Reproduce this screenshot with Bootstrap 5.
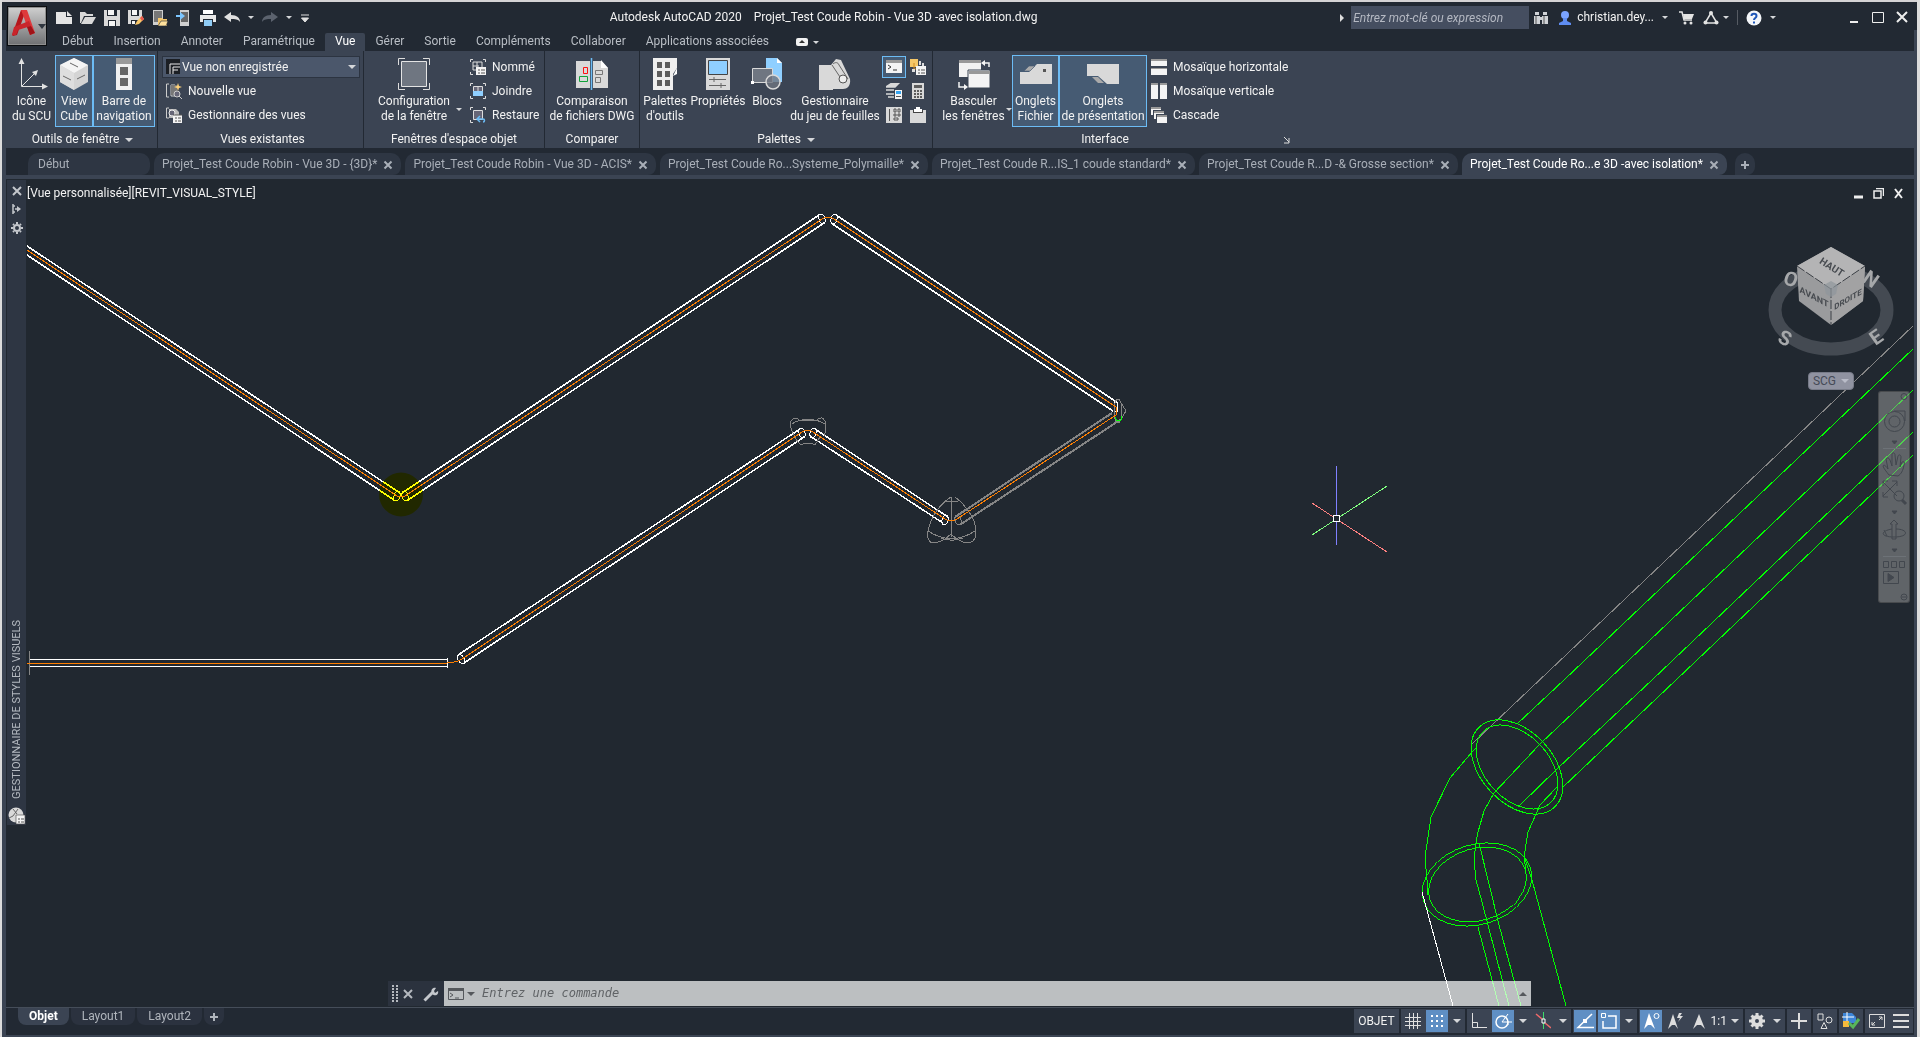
<!DOCTYPE html>
<html lang="fr">
<head>
<meta charset="utf-8">
<meta name="viewport" content="width=device-width, initial-scale=1">
<title>Autodesk AutoCAD 2020</title>
<link href="https://cdn.jsdelivr.net/npm/bootstrap@5.3.0/dist/css/bootstrap.min.css" rel="stylesheet">
<style>
:root{--dark:#222933;--panel:#3b4453;--canvas:#212830;--tab:#2e3643;--ink:#f2f2f2;--soft:#b9bec5;--hi:#6cbcf5}
html,body{height:100%}
body{background:#dcdcdc;font-family:Roboto,"Open Sans",sans-serif;font-size:12px;line-height:15px;color:var(--ink);overflow:hidden;white-space:nowrap}
button,input,select{font:inherit;color:inherit;background:none;border:0;padding:0;margin:0;line-height:15px}
svg{display:block;flex:none}
h2{font-size:12px;line-height:15px;font-weight:400;margin:0}
.app-window{height:100vh;padding:0 3px 2px 4px;margin:0 3px 0 2px;border-top:2px solid #d5d3d5;background:linear-gradient(var(--dark) 28px,var(--panel) 28px)}
.app-head{background:var(--dark)}
.app-logo{width:40px;height:40px;margin:4px 9px 0 1px;border:1px solid #0b0d10;background:linear-gradient(#d0d0d0,#6f7072);box-shadow:inset 0 0 0 1px #8f8f8f}
.head-row{height:31px}
.quick{gap:8px}
.doc-title{gap:12px}
.caret{width:0;height:0;flex:none;border:4px solid transparent;border-top-color:#d5d7da;border-bottom:0}
.caret.sm{border-width:3px;border-bottom-width:0}
.seek{width:178px;height:23px;background:#454e60;padding:0 2px;font-style:italic}
.seek::placeholder,.cmd-input::placeholder{color:inherit;opacity:1}
.seek{color:#b4b8c2}
.shop{margin-left:11px}
.win-keys{margin-left:66px}
.menu-row{margin-left:-4px}
.menu-row a{color:var(--soft);text-decoration:none;height:18px;padding:0 10px;line-height:17px}
.menu-row a.on{background:var(--panel);color:#fff;border-radius:2px 2px 0 0}
.ribbon{background:var(--panel);margin:0 0 0 2px}
.pane{border-right:1px solid var(--dark);height:97px;padding-top:4px;flex:none}
.pane-body{height:72px}
.pane-name{height:21px;padding-top:4px;gap:6px}
.big{height:72px;flex:none;border:1px solid transparent;padding-top:2px;display:flex;flex-direction:column;align-items:center;gap:4px;line-height:15px;text-align:center}
.big.on,.mini.on{background:#465b73;border-color:var(--hi)}
.line-btn{height:24px;display:flex;align-items:center;gap:6px}
.view-pick{position:relative;width:198px;height:22px;margin:1px 0;background:#4b576b;border:1px solid #2c3441}
.view-pick select{appearance:none;width:100%;height:20px;padding:0 16px 0 19px}
.view-pick svg{position:absolute;left:3px;top:2px}
.view-pick .caret{position:absolute;right:3px;top:8px;pointer-events:none}
.mini{width:24px;height:22px;margin:1px 0;border:1px solid transparent;display:flex;align-items:center;justify-content:center}
.file-tabs{background:var(--dark);height:27px;padding:5px 0 0 22px;color:#a9afb8}
.file-tab{height:22px;background:var(--tab);border-radius:10px 10px 8px 0;padding:1px 8px 0 8px;gap:6px;margin-right:4px}
.file-tab:first-child{width:122px;padding-left:10px}
.file-tab.on{background:var(--panel);color:#fff}
.file-tab a{color:inherit;text-decoration:none}
.space{background:var(--canvas);margin-top:4px;position:relative;min-height:0;overflow:hidden}
.drawing{position:absolute;inset:0;width:100%;height:100%}
.palette{position:absolute;left:1px;top:1px;width:19px;height:645px;background:var(--tab);color:#b5bac1;padding:6px 0 0}
.palette h2{writing-mode:vertical-rl;transform:rotate(180deg);font-size:11px;line-height:13px}
.view-label{position:absolute;left:21px;top:7px}
.view-win{position:absolute;right:10px;top:9px;gap:9px}
.scg{position:absolute;right:60px;top:193px;width:46px;height:18px;border-radius:4px;background:#9093a1;border:1px solid #777b88;color:#454a56;gap:5px;line-height:14px}
.scg .caret{border-top-color:#b9bcc8}
.nav-bar{position:absolute;right:4px;top:212px;width:32px;height:212px;border-radius:3px;background:rgba(160,160,160,.5);border:1px solid rgba(0,0,0,.25)}
.command{position:absolute;left:382px;right:383px;bottom:1px;height:25px}
.cmd-grip{width:56px;background:#2b323e;gap:4px}
.cmd-field{background:rgba(255,255,255,.7);color:#55585c;gap:3px}
.cmd-field .caret{border-top-color:#55585c}
.cmd-input{font:italic 12px/15px "DejaVu Sans Mono",monospace;color:#606366;outline:0}
.foot{background:var(--dark);height:28px;border-top:1px solid #454d59}
.lay-tab{height:17px;background:#2b323f;color:#b0b5bc;border-radius:0 0 8px 8px;padding:0 11px;line-height:16px;text-decoration:none;margin-right:2px}
.lay-tab.on{background:var(--panel);color:#fff;font-weight:700}
.grp{background:var(--panel);height:24px;display:flex;align-items:center}
.st{width:24px;height:24px;border:1px solid transparent;background-clip:padding-box;display:flex;align-items:center;justify-content:center}
.st.on{background-color:#5f8fc4}
.status{gap:2px;padding:1px 1px 0 0}
</style>
</head>
<body>
<div class="app-window d-flex flex-column">
<header class="app-head d-flex">
  <button class="app-logo d-flex align-items-center" aria-label="Menu de l'application">
    <svg width="38" height="38" viewBox="0 0 38 38"><path d="M4 28 13 3h5l-9 25-4 1z" fill="#b3161c"/><path d="M13 3h6l8 23-5 2L15 8z" fill="#de3a3c"/><path d="M4 28 6 20 21 14l2 5-13 4-2 5z" fill="#c9252b"/><path d="M22 28l-3-8 4-1 4 7z" fill="#a01318"/><path d="M30 17h8l-4 5z" fill="#30363f"/></svg>
  </button>
  <div class="flex-grow-1">
    <div class="head-row d-flex align-items-center">
      <div class="quick d-flex align-items-center">
        <button aria-label="Nouveau"><svg width="16" height="16"><path d="M0 2h10v5h6v7H0z" fill="#e4e4e4"/><path d="M11 1l5 5h-5z" fill="#e4e4e4"/></svg></button>
        <button aria-label="Ouvrir"><svg width="16" height="16"><path d="M0 2h5l2 2h6v2H4L1 13H0z" fill="#d9d9d9"/><path d="M5 7h11l-4 7H1z" fill="#d9d9d9"/></svg></button>
        <button aria-label="Enregistrer"><svg width="16" height="16"><path d="M0 0h16v16H0z" fill="#d9d9d9"/><path d="M3 0h10v6H3zM4 10h8v6H4z" fill="#222933"/><path d="M4 0h6v5H4zM5 11h6v5H5z" fill="#f4f4f4"/></svg></button>
        <button aria-label="Enregistrer sous"><svg width="16" height="16"><path d="M0 0h14v8l-6 6H0z" fill="#d9d9d9"/><path d="M3 0h8v6H3zM3 10h7v4H3z" fill="#222933"/><path d="M4 0h5v5H4zM4 11h3v3H4z" fill="#f4f4f4"/><path d="M7 15l2-4 5-5 2 3-5 5z" fill="#f8c76a"/><path d="M12 8l2-2 2 3-2 2z" fill="#e8554d"/></svg></button>
        <button aria-label="Ouvrir depuis le web"><svg width="16" height="16"><path d="M1 0h10v15H1z" fill="#d0d0d0"/><path d="M2 1h8v11H2z" fill="#777"/><path d="M6 8h4l1 1h4v7H6z" fill="#f4c66c"/><path d="M9 11h7l-2 5H6z" fill="#ffe09c" stroke="#222933" stroke-width=".6"/></svg></button>
        <button aria-label="Enregistrer vers le web"><svg width="16" height="16"><path d="M4 0h9v16H4z" fill="#d0d0d0"/><path d="M5 2h7v10H5z" fill="#666"/><path d="M0 5h4V2l5 4-5 4V7H0z" fill="#7cc6ff"/></svg></button>
        <button aria-label="Imprimer"><svg width="16" height="16"><path d="M3 0h10v4H3z" fill="#fff"/><path d="M0 5h16v7H0z" fill="#e8e8e8"/><path d="M3 9h10v7H3z" fill="#222933"/><path d="M4 10h8v6H4z" fill="#8fcbf5"/></svg></button>
        <button aria-label="Annuler"><svg width="16" height="16"><path d="M0 7l7-5v3c6 0 9 3 9 7-2-3-5-3-9-3v3z" fill="#e0e0e0"/></svg></button>
        <span class="caret sm"></span>
        <button aria-label="Rétablir"><svg width="16" height="16"><path d="M16 7 9 2v3c-6 0-9 3-9 7 2-3 5-3 9-3v3z" fill="#5b626e"/></svg></button>
        <span class="caret sm"></span>
        <button aria-label="Personnaliser"><svg width="10" height="10"><path d="M1 2h8M1.500 5h7L5 9z" stroke="#e0e0e0" fill="#e0e0e0"/></svg></button>
      </div>
      <div class="doc-title flex-grow-1 d-flex justify-content-center"><span>Autodesk AutoCAD 2020</span><span>Projet_Test Coude Robin - Vue 3D -avec isolation.dwg</span></div>
      <svg width="10" height="10" class="me-1"><path d="M3 1l4 4-4 4z" fill="#ddd"/></svg>
      <input class="seek" type="text" aria-label="Recherche" placeholder="Entrez mot-clé ou expression">
      <button class="ms-1 me-2" aria-label="Rechercher"><svg width="16" height="16"><path d="M1 6h6v8H1zM9 6h6v8H9zM2 2h4v3H2zM10 2h4v3h-4zM7 7h2v3H7z" fill="#cfd2d6"/><path d="M3 6v8M11 6v8" stroke="#555"/></svg></button>
      <button class="d-flex align-items-center gap-1"><svg width="16" height="16"><circle cx="8" cy="5" r="4" fill="#7aa3ff"/><path d="M6 8h4v3l4 2v2H2v-2l4-2z" fill="#5f8df2"/></svg>christian.dey...<span class="caret sm ms-1"></span></button>
      <button class="shop" aria-label="Boutique"><svg width="16" height="16"><path d="M0 2h3l2 8h8" fill="none" stroke="#e3e3e3" stroke-width="1.500"/><path d="M4 4h11l-2 5H5z" fill="#e3e3e3"/><circle cx="6" cy="13" r="1.500" fill="#e3e3e3"/><circle cx="12" cy="13" r="1.500" fill="#e3e3e3"/></svg></button>
      <button class="ms-2 d-flex align-items-center gap-1" aria-label="Autodesk 360"><svg width="16" height="16"><path d="M8 3 2 13h12z" fill="none" stroke="#e3e3e3" stroke-width="1.500"/><circle cx="8" cy="3" r="2" fill="#e3e3e3"/><circle cx="2.500" cy="12.500" r="2" fill="#e3e3e3"/><circle cx="13.500" cy="12.500" r="2" fill="#e3e3e3"/></svg><span class="caret sm"></span></button>
      <div class="vr mx-2 my-2"></div>
      <button class="d-flex align-items-center gap-2" aria-label="Aide"><svg width="16" height="16"><circle cx="8" cy="8" r="7.500" fill="#f4f6fa"/><path d="M5.500 6c0-3 5-3 5 0 0 2-2.500 2-2.500 4M8 11.500v2" fill="none" stroke="#1e56b8" stroke-width="2"/></svg><span class="caret sm"></span></button>
      <div class="win-keys d-flex align-items-center"><button aria-label="Réduire"><svg width="24" height="16"><path d="M8 12h8" stroke="#eee" stroke-width="2"/></svg></button><button aria-label="Agrandir"><svg width="24" height="16"><path d="M6.500 2.500h11v10h-11z" fill="none" stroke="#eee"/></svg></button><button aria-label="Fermer"><svg width="24" height="16"><path d="M7 2l10 10M17 2L7 12" stroke="#eee" stroke-width="2"/></svg></button></div>
    </div>
    <nav class="menu-row d-flex" aria-label="Ruban">
      <a href="#">Début</a><a href="#">Insertion</a><a href="#">Annoter</a><a href="#">Paramétrique</a><a href="#" class="on">Vue</a><a href="#">Gérer</a><a href="#">Sortie</a><a href="#">Compléments</a><a href="#">Collaborer</a><a href="#">Applications associées</a>
      <button class="d-flex align-items-center gap-1 ms-3" aria-label="Réduire le ruban"><svg width="14" height="10"><rect x="1" y="1" width="12" height="8" rx="2" fill="#f2f2f2"/><path d="M4 6h6L7 3z" fill="#333"/></svg><span class="caret sm"></span></button>
    </nav>
  </div>
</header>

<section class="ribbon d-flex">
  <div class="pane" style="width:150px">
    <div class="pane-body d-flex">
      <button class="big" style="width:47px"><svg width="32" height="32"><path d="M5.500 3v25.500H30M6 28 20 14" fill="none" stroke="#e2e2e2"/><path d="M5.500 0l3 6h-6zM32 28.500l-6 3v-6zM22 12l-6 2 4 4z" fill="#e2e2e2"/></svg><span>Icône<br>du SCU</span></button>
      <button class="big on" style="width:38px"><svg width="32" height="32"><path d="M16 0l14 7v17l-14 8L2 24V7z" fill="#d4d4d4"/><path d="M16 0l14 7-14 8L2 7z" fill="#f4f4f4"/><path d="M16 15v17L2 24V7z" fill="#dedede"/><path d="M12 5l8 4M5 18l8 4M19 21l8-4" stroke="#666" fill="none"/></svg><span>View<br>Cube</span></button>
      <button class="big on" style="width:62px"><svg width="32" height="32"><path d="M8 0h16v6H8z" fill="#999"/><path d="M8 6h16v26H8z" fill="#f0f0f0"/><path d="M12 9h8v8h-8zM12 20h8v8h-8z" fill="#666"/></svg><span>Barre de<br>navigation</span></button>
    </div>
    <div class="pane-name d-flex align-items-center justify-content-center"><h2>Outils de fenêtre</h2><span class="caret"></span></div>
  </div>
  <div class="pane" style="width:206px;padding-left:4px">
    <div class="pane-body d-flex flex-column">
      <div class="view-pick"><svg width="16" height="16"><path d="M0 0h14v15H0z" fill="#1c1f24"/><path d="M4 15V5h10M7 15V8h7M7 11h5" stroke="#e8e8e8" fill="none"/></svg><select aria-label="Vue enregistrée"><option>Vue non enregistrée</option></select><span class="caret"></span></div>
      <button class="line-btn ms-1"><svg width="16" height="16"><path d="M3 1H.5v13H3M5 2h4M5 2v11h4" stroke="#ccc" fill="none"/><path d="M5 2h6v10H5z" fill="#777"/><circle cx="11" cy="11" r="3" fill="#667" stroke="#ccc"/><path d="M13 13l3 3" stroke="#ccc"/><path d="M12 0l1 3 3 1-3 1-1 3-1-3-3-1 3-1z" fill="#ffd27a"/></svg>Nouvelle vue</button>
      <button class="line-btn ms-1"><svg width="16" height="16"><path d="M3 1H.5v10H3" stroke="#ccc" fill="none"/><path d="M3 2h7l3 3v6H3z" fill="#bbb"/><circle cx="6" cy="6" r="3" fill="#667" stroke="#eee"/><path d="M7 8h9v8H7z" fill="#f4f4f4"/><path d="M7 8h9M9 11h2M12 11h3M9 14h2M12 14h3" stroke="#555"/></svg>Gestionnaire des vues</button>
    </div>
    <div class="pane-name d-flex align-items-center justify-content-center"><h2>Vues existantes</h2></div>
  </div>
  <div class="pane" style="width:181px">
    <div class="pane-body d-flex">
      <button class="big ms-2" style="width:84px"><svg width="32" height="32"><path d="M7 .5H.5V7M25 .5h6.500V7M.5 25v6.500H7M31.500 25v6.500H25" stroke="#ddd" fill="none"/><path d="M3.500 3.500h25v25h-25z" fill="#6f7681" stroke="#e4e4e4"/></svg><span>Configuration<br>de la fenêtre</span></button>
      <span class="caret sm align-self-end mb-3 me-2"></span>
      <div>
        <button class="line-btn"><svg width="16" height="16"><path d="M3 .5H.5V3M13 .5h2.500V3M.5 13v2.500H3M3 3h9v8H3zM3 7h6M7 3v5" stroke="#ddd" fill="none"/><path d="M6 8h10v8H6z" fill="#f4f4f4"/><path d="M8 11h2M11 11h4M8 14h2M11 14h4" stroke="#555"/></svg>Nommé</button>
        <button class="line-btn"><svg width="16" height="16"><path d="M3 .5H.5V3M13 .5h2.500V3M.5 13v2.500H3M13 15.500h2.500V13" stroke="#ddd" fill="none"/><path d="M3.500 3.500h9v5h-9zM8 3v5" stroke="#ddd" fill="#667"/><path d="M3 8h10v5H3z" fill="#8fcfff"/></svg>Joindre</button>
        <button class="line-btn"><svg width="16" height="16"><path d="M3 .5H.5V3M13 .5h2.500V3M.5 13v2.500H3" stroke="#ddd" fill="none"/><path d="M3.500 3.500h9v9h-9z" stroke="#ddd" fill="#667"/><path d="M7 12h6c2 0 2 3 0 3M10 9l-3 3 3 3" stroke="#6cbcf5" stroke-width="1.500" fill="none"/></svg>Restaure</button>
      </div>
    </div>
    <div class="pane-name d-flex align-items-center justify-content-center"><h2>Fenêtres d'espace objet</h2></div>
  </div>
  <div class="pane" style="width:95px">
    <div class="pane-body d-flex justify-content-center">
      <button class="big"><svg width="32" height="32"><path d="M0 3h14v27H0zM17 3h8l7 7v20H17z" fill="#d9d9d9"/><path d="M25 2l7 8h-7z" fill="#fff"/><path d="M15.500 0v32" stroke="#6cbcf5" stroke-width="1.500"/><path d="M7.500 9.500h4v6h-4z" fill="none" stroke="#f11"/><path d="M3.500 18.500h8v5h-8z" fill="none" stroke="#12a33a"/><path d="M19.500 12.500h7v4h-7zM19.500 19.500h5v5h-5z" fill="none" stroke="#777"/></svg><span>Comparaison<br>de fichiers DWG</span></button>
    </div>
    <div class="pane-name d-flex align-items-center justify-content-center"><h2>Comparer</h2></div>
  </div>
  <div class="pane" style="width:293px">
    <div class="pane-body d-flex">
      <button class="big" style="width:50px"><svg width="32" height="32"><path d="M4 0h24v10l-4 6v16H4z" fill="#efefef"/><path d="M28 10v6l-4 2z" fill="#fff"/><path d="M8 4h5v6H8zM16 4h5v6h-5zM8 13h5v6H8zM16 13h5v6h-5zM8 22h5v6H8zM16 22h5v6h-5z" fill="#5d5d5d"/></svg><span>Palettes<br>d'outils</span></button>
      <button class="big" style="width:56px"><svg width="32" height="32"><path d="M4 0h24v32H4z" fill="#d9d9d9"/><path d="M6.500 2.500h19v14h-19z" fill="#8fcfff" stroke="#444"/><path d="M7 21.500h17M7 27.500h17M12 19v5M19 25v5" stroke="#666"/></svg><span>Propriétés</span></button>
      <button class="big" style="width:42px"><svg width="32" height="32"><path d="M15 0h11l5 5v19H15z" fill="#8fcfff"/><path d="M26 0l5 5h-5z" fill="#fff"/><path d="M1.500 10.500h20v14h-20z" fill="#6f7681" stroke="#d9d9d9"/><circle cx="22" cy="24" r="7" fill="#6f7681" fill-opacity=".8" stroke="#d9d9d9" stroke-width="1.500"/><path d="M0 23h3v3H0z" fill="#fff"/></svg><span>Blocs</span></button>
      <button class="big" style="width:94px"><svg width="32" height="32"><path d="M0 7h14v25H0z" fill="#d9d9d9"/><path d="M0 31V7h12l5-6 5 1 9 19c1 7-3 10-7 10z" fill="#d9d9d9"/><path d="M13 7l12 18M14 6c2-2 5-2 6 1l9 14" stroke="#666" fill="none"/><circle cx="24" cy="21" r="4" fill="#eee" stroke="#555"/></svg><span>Gestionnaire<br>du jeu de feuilles</span></button>
      <div class="d-flex flex-column"><button class="mini on" aria-label="Ligne de commande"><svg width="16" height="16"><path d="M0 1h16v3H0z" fill="#999"/><path d="M0 4h16v10H0z" fill="#f4f4f4"/><path d="M2 6l3 2-3 2M7 11h4" stroke="#333" fill="none"/></svg></button>
      <button class="mini" aria-label="Calques"><svg width="16" height="16"><path d="M6 0h7l-4 4H0zM0 7h8M0 11h8M2 14h6" fill="#d9d9d9" stroke="#d9d9d9" stroke-width="1.500"/><path d="M9 7h7v9H9z" fill="#f4f4f4"/><path d="M10 8h5v3h-5z" fill="#36a5f0"/><path d="M10 13.500h5" stroke="#555"/></svg></button>
      <button class="mini" aria-label="Concentrateur"><svg width="16" height="16"><path d="M0 0h16v16H0z" fill="#d9d9d9"/><path d="M3.500 2v12M8 2h2v3H8zM12 2h2v3h-2zM8 7h2v2H8zM12 7h2v2h-2zM8 11h4v2H8z" stroke="#555" fill="none"/></svg></button></div>
      <div class="d-flex flex-column"><button class="mini" aria-label="Références externes"><svg width="16" height="16"><path d="M0 0h8v8H0z" fill="#f5c768"/><path d="M4 4v6h6" stroke="#d18a1e" fill="none"/><path d="M9 2h2v4H9zM12 4h2v3h-2zM2 10h3v3H2z" fill="#ddd"/><path d="M6 7h10v9H6z" fill="#f4f4f4"/><path d="M8 11h2M11 11h4M8 14h2M11 14h4" stroke="#555"/></svg></button>
      <button class="mini" aria-label="Calculatrice"><svg width="16" height="16"><path d="M2 0h12v16H2z" fill="#d9d9d9"/><path d="M4 2h8v3H4zM4 7h2v2H4zM7 7h2v2H7zM10 7h2v2h-2zM4 10h2v2H4zM7 10h2v2H7zM10 10h2v2h-2zM4 13h2v2H4zM7 13h2v2H7zM10 13h2v2h-2z" fill="#5d5d5d"/></svg></button>
      <button class="mini" aria-label="Presse-papiers"><svg width="16" height="16"><path d="M0 3h16v13H0z" fill="#d9d9d9"/><path d="M3 3h10v3H3z" fill="#444"/><path d="M6 0h4v2h2v3H4V2h2z" fill="#fff"/></svg></button></div>
    </div>
    <div class="pane-name d-flex align-items-center justify-content-center"><h2>Palettes</h2><span class="caret"></span></div>
  </div>
  <div class="pane border-0" style="width:362px">
    <div class="pane-body d-flex ps-2">
      <button class="big" style="width:65px"><svg width="32" height="32"><path d="M1 2h22v17H1z" fill="#f2f2f2"/><path d="M1 2h22v3H1z" fill="#999"/><path d="M10 12h22v18H10z" fill="#f4f4f4" stroke="#3b4453"/><path d="M11 13h21v3H11z" fill="#999"/><path d="M31 9V5h-6M1 24v5h6" stroke="#f4f4f4" fill="none" stroke-width="1.500"/><path d="M23 5l4-3v6zM10 29l-4-3v6z" fill="#f4f4f4"/></svg><span>Basculer<br>les fenêtres</span></button>
      <span class="caret sm align-self-end mb-3"></span>
      <button class="big on" style="width:47px"><svg width="32" height="32"><path d="M0 14h9l8-8h15v20H0z" fill="#d9d9d9"/><path d="M4 13l5-5h6l-5 5z" fill="#aaa" stroke="#465b73" stroke-width=".6"/><path d="M23 11h3v3h-3z" fill="#555"/></svg><span>Onglets<br>Fichier</span></button>
      <button class="big on" style="width:88px"><svg width="32" height="32"><path d="M0 6h32v20H20l-9-8H0z" fill="#d9d9d9"/><path d="M5 19h6l6 6h-6z" fill="#aaa"/></svg><span>Onglets<br>de présentation</span></button>
      <div class="ms-1">
        <button class="line-btn"><svg width="16" height="16"><path d="M0 0h16v3H0zM0 9h16v3H0z" fill="#999"/><path d="M0 2h16v5H0zM0 10h16v6H0z" fill="#f4f4f4"/></svg>Mosaïque horizontale</button>
        <button class="line-btn"><svg width="16" height="16"><path d="M0 0h7v16H0zM9 0h7v16H9z" fill="#f4f4f4"/><path d="M0 0h7v2H0zM9 0h7v2H9z" fill="#999"/></svg>Mosaïque verticale</button>
        <button class="line-btn"><svg width="16" height="16"><path d="M0 0h10v2H0zM3 4h10v2H3zM6 8h10v2H6z" fill="#999"/><path d="M0 2h10v1H2v5H0zM3 6h10v1H5v5H3zM6 10h10v6H6z" fill="#f4f4f4"/></svg>Cascade</button>
      </div>
    </div>
    <div class="pane-name d-flex align-items-center justify-content-end"><h2 class="mx-auto">Interface</h2><svg width="8" height="8" class="me-1"><path d="M1 1l5 5M6 2v5H1" stroke="#ddd" fill="none"/></svg></div>
  </div>
</section>

<nav class="file-tabs d-flex" aria-label="Fichiers">
  <div class="file-tab d-flex align-items-center"><a href="#">Début</a></div>
  <div class="file-tab d-flex align-items-center"><a href="#">Projet_Test Coude Robin - Vue 3D - {3D}*</a><button aria-label="Fermer"><svg width="10" height="10"><path d="M1.500 1.500l7 7M8.500 1.500l-7 7" stroke="#a9afb8" stroke-width="2"/></svg></button></div>
  <div class="file-tab d-flex align-items-center"><a href="#">Projet_Test Coude Robin - Vue 3D - ACIS*</a><button aria-label="Fermer"><svg width="10" height="10"><path d="M1.500 1.500l7 7M8.500 1.500l-7 7" stroke="#a9afb8" stroke-width="2"/></svg></button></div>
  <div class="file-tab d-flex align-items-center"><a href="#">Projet_Test Coude Ro...Systeme_Polymaille*</a><button aria-label="Fermer"><svg width="10" height="10"><path d="M1.500 1.500l7 7M8.500 1.500l-7 7" stroke="#a9afb8" stroke-width="2"/></svg></button></div>
  <div class="file-tab d-flex align-items-center"><a href="#">Projet_Test Coude R...IS_1 coude standard*</a><button aria-label="Fermer"><svg width="10" height="10"><path d="M1.500 1.500l7 7M8.500 1.500l-7 7" stroke="#a9afb8" stroke-width="2"/></svg></button></div>
  <div class="file-tab d-flex align-items-center"><a href="#">Projet_Test Coude R...D -&amp; Grosse section*</a><button aria-label="Fermer"><svg width="10" height="10"><path d="M1.500 1.500l7 7M8.500 1.500l-7 7" stroke="#a9afb8" stroke-width="2"/></svg></button></div>
  <div class="file-tab on d-flex align-items-center"><a href="#">Projet_Test Coude Ro...e 3D -avec isolation*</a><button aria-label="Fermer"><svg width="10" height="10"><path d="M1.500 1.500l7 7M8.500 1.500l-7 7" stroke="#a9afb8" stroke-width="2"/></svg></button></div>
  <button class="file-tab align-self-center ms-1 px-1" aria-label="Nouveau dessin"><svg width="12" height="12"><path d="M6 2v8M2 6h8" stroke="#a9afb8" stroke-width="2"/></svg></button>
</nav>

<main class="space flex-grow-1">
  <svg class="drawing" viewBox="6 179 1908 828" preserveAspectRatio="xMinYMin meet" fill="none" shape-rendering="crispEdges" aria-hidden="true">
    <!-- corps des tuyaux : deux génératrices, bouts elliptiques, axe orange -->
    <g stroke="#fff" stroke-width="1.500">
      <path d="M27 246 400 493M27 255 394 500M402 493 819 215M408 500 824 223M836 215 1118 403M831 223 1113 411M815 429 948 517M810 436 943 523M800 429 458 655M804 437 464 663"/>
    </g>
    <g stroke="#fff">
      <path d="M29 659.500H447M29 666.500H447M447 658v10"/>
      <ellipse cx="397" cy="496" rx="3" ry="5" transform="rotate(20 397 496)"/><ellipse cx="405" cy="496" rx="3" ry="5" transform="rotate(-20 405 496)"/>
      <ellipse cx="822" cy="219" rx="3" ry="5" transform="rotate(-20 822 219)"/><ellipse cx="834" cy="219" rx="3" ry="5" transform="rotate(20 834 219)"/>
      <ellipse cx="802" cy="433" rx="3" ry="5" transform="rotate(-20 802 433)"/><ellipse cx="813" cy="433" rx="3" ry="5" transform="rotate(20 813 433)"/>
      <ellipse cx="945" cy="520" rx="3" ry="5" transform="rotate(20 945 520)"/><ellipse cx="461" cy="659" rx="3" ry="5" transform="rotate(-30 461 659)"/>
      <ellipse cx="1116" cy="407" rx="2" ry="5"/>
    </g>
    <g stroke="#858585">
      <path d="M1112 413 955 517M1120 420 961 524" stroke-width="2"/>
      <ellipse cx="958" cy="520" rx="3" ry="5" transform="rotate(-20 958 520)"/>
      <path d="M29.500 651v24"/>
      <path d="M791 421c3-4 6-3 8-1 6 1 12 1 18 0 3-3 6-3 8 1 2 5 1 10-1 15M791 421c-1 6 0 9 2 12M793 433c2 5 4 9 8 12l4-2h6l4 2 5-8M792 424c8-6 24-6 33 0"/>
      <path d="M951.500 497v40M951 497c-8 5-15 13-20 24-4 10-5 19 1 22 6 0 12-2 19-9 7 7 13 10 20 8 6-2 6-12 3-21-5-11-12-19-19-24M928 531c15 10 32 10 47 0M945 501h13M941 538c7 3 14 3 22 0"/>
      <ellipse cx="1118" cy="411" rx="4" ry="12"/><path d="M1120 401l6 10-6 10"/>
    </g>
    <path d="M1115 417l2 4 4-1v-4" stroke="#0f0"/>
    <g stroke="#ff7f00">
      <path d="M27 250 397 496h8L822 219q6-4 12 0l282 188v8L957 519q-6 4-12 0L813 432q-5-4-11 0L462 659q-6 4-15 3.500M27 663.500H447"/>
    </g>
    <!-- coude en gros plan -->
    <path d="M1913 326 1472 744" stroke="#858585"/>
    <g stroke="#0f0">
      <path d="M1913 349 1564 680 1517 724M1913 390 1608 680 1540 744 1494 793 1484 811 1478 832 1476 843 1474 860 1476 880 1478 887 1488 925 1509 1006M1913 432 1652 680 1558 768 1518 807M1913 455 1676 680 1562 788"/>
      <ellipse cx="1517" cy="767" rx="55" ry="36" transform="rotate(47 1517 767)"/><ellipse cx="1517" cy="767" rx="49" ry="32" transform="rotate(47 1517 767)"/>
      <ellipse cx="1477" cy="884.500" rx="56" ry="40" transform="rotate(-17 1477 884.500)"/><ellipse cx="1477.500" cy="884.500" rx="50" ry="36" transform="rotate(-17 1477.500 884.500)"/>
      <path d="M1476 748 1472 752 1450 778 1431 817 1425 857 1427 880V895M1557 787 1540 805 1528 832 1524 857 1526 870M1479 843 1499 925 1521 1006M1478 927 1499 1006M1524 856 1532 880 1566 1006"/>
    </g>
    <path d="M1422 892 1453 1006" stroke="#fff"/>
    <circle cx="401" cy="494.500" r="22" fill="#ff0" style="mix-blend-mode:multiply" shape-rendering="auto"/>
    <!-- curseur -->
    <path d="M1336.500 466v50M1336.500 522v23" stroke="#8080ff"/><path d="M1312 535 1387 486" stroke="#80ff80"/><path d="M1312 503 1387 552" stroke="#ff8080"/><path d="M1333.500 515.500h6v6h-6z" fill="#212830" stroke="#fff"/>
    <!-- cube de vue -->
    <g shape-rendering="auto">
      <ellipse cx="1831" cy="310" rx="56" ry="39" stroke="#444a52" stroke-width="13"/>
      <g fill="#a6a8aa" font-size="20" font-weight="700" text-anchor="middle"><text x="1791" y="286" transform="rotate(20 1791 279)">O</text><text x="1871" y="286" transform="rotate(35 1871 279)">N</text><text x="1785" y="345" transform="rotate(25 1785 338)">S</text><text x="1876" y="344" transform="rotate(-35 1876 337)">E</text></g>
      <path d="M1831 247 1865 266 1863 301 1831 325 1799 301 1797 266z" fill="#9a9b9d"/>
      <path d="M1831 247 1865 266 1831 289 1797 266z" fill="#b4b4b5"/><path d="M1831 289 1865 266 1863 301 1831 325z" fill="#a2a2a3"/>
      <path d="M1797 266 1831 289 1865 266M1831 289V325" stroke="#3d4147" stroke-dasharray="9 2"/>
      <path d="M1831 281l7 4-2 9-5 3-5-3-2-9z" fill="#8e959b" fill-opacity=".7"/>
      <g fill="#474b50" font-weight="700" text-anchor="middle" font-size="9"><text transform="translate(1830 270) rotate(33)" font-size="10">HAUT</text><text transform="translate(1814 300) skewY(28)">AVANT</text><text transform="translate(1848 302) skewY(-30)" font-size="8">DROITE</text></g>
    </g>
  </svg>
  <aside class="palette d-flex flex-column align-items-center">
    <button aria-label="Fermer la palette"><svg width="10" height="10"><path d="M1 1l8 8M9 1l-8 8" stroke="#c4c7cc" stroke-width="2"/></svg></button>
    <button class="mt-2" aria-label="Masquage automatique"><svg width="10" height="10"><path d="M1 0v10M1 2h2M1 8h2M3 5h5" stroke="#c4c7cc" stroke-width="1.500"/><path d="M5 2l4 3-4 3z" fill="#c4c7cc"/></svg></button>
    <button class="mt-2" aria-label="Propriétés"><svg width="12" height="12"><circle cx="6" cy="6" r="3" fill="none" stroke="#c4c7cc" stroke-width="2"/><path d="M6 0v2M6 10v2M0 6h2M10 6h2M2 2l1 1M9 9l1 1M10 2L9 3M3 9l-1 1" stroke="#c4c7cc" stroke-width="2"/></svg></button>
    <h2 class="mt-auto mb-2">GESTIONNAIRE DE STYLES VISUELS</h2>
    <svg width="18" height="18"><circle cx="8" cy="8" r="7.500" fill="#d9d9d9"/><path d="M5 2l4 5M10 2L5 9l-4 2" stroke="#666" fill="none"/><path d="M8 8h9v9H8z" fill="#f4f4f4" stroke="#444" stroke-width=".6"/><path d="M10 12h2M13 12h3M10 15h2M13 15h3" stroke="#555"/></svg>
  </aside>
  <div class="view-label">[Vue personnalisée][REVIT_VISUAL_STYLE]</div>
  <div class="view-win d-flex"><button aria-label="Réduire la vue"><svg width="11" height="11"><path d="M1 9h9" stroke="#eee" stroke-width="3"/></svg></button><button aria-label="Restaurer la vue"><svg width="11" height="11"><path d="M3 .5h7.500V8M1 3h7v7H1z" stroke="#eee" fill="none" stroke-width="1.500"/></svg></button><button aria-label="Fermer la vue"><svg width="11" height="11"><path d="M2 1l7 9M9 1l-7 9" stroke="#eee" stroke-width="2"/></svg></button></div>
  <button class="scg d-flex align-items-center justify-content-center">SCG<span class="caret"></span></button>
  <div class="nav-bar"><svg width="30" height="210" fill="none" stroke="#42474e"><circle cx="25" cy="4.500" r="3"/><circle cx="15.500" cy="29.500" r="10"/><path d="M15 19h11v10"/><circle cx="15.500" cy="29.500" r="5.500"/><path d="M13 49h5l-2.500 3zM13 119h5l-2.500 3zM13 157h5l-2.500 3z" fill="#42474e"/><path d="M4 56.500h23M4 164.500h23" stroke="#6d7277"/><path d="M10 83c-3-4-5-6-6-9 1-2 3 0 5 3l-2-10c1-2 3-1 4 1l2 6V62c1-2 3-1 3 1l1 10 2-9c1-2 3-1 3 1l-1 10 2-5c2-1 3 0 2 3-1 6-3 9-6 11z"/><path d="M4 90l14 14M4 104l14-14M4 94v-5h5M13 89h5v5M4 100v5h5"/><circle cx="20" cy="104" r="5"/><path d="M23 108l4 4" stroke-width="3"/><path d="M13 147v-15h-2l4-4 4 4h-2v15zM13 137c-12 2-12 8 2 8 16 0 14-8 2-8M5 138l3 6"/><path d="M4.500 169.500h5v6h-5zM12.500 169.500h5v6h-5zM20.500 169.500h5v6h-5zM4.500 179.500h15v12h-15z"/><path d="M9 181.500v8l6-4z" fill="#42474e"/><circle cx="25" cy="205" r="3"/><path d="M23 205h4"/></svg></div>
  <div class="command d-flex">
    <div class="cmd-grip d-flex align-items-center ps-1"><svg width="7" height="18"><path d="M1 0v18M5 0v18" stroke="#b5b9bf" stroke-width="2" stroke-dasharray="2 1"/></svg><button aria-label="Fermer la ligne de commande"><svg width="12" height="12"><path d="M1 2l8 8M9 2l-8 8" stroke="#b5b9bf" stroke-width="2"/></svg></button><button class="ms-1" aria-label="Options"><svg width="16" height="16"><path d="M1.500 14.500l8-8" stroke="#c4c7cc" stroke-width="3"/><path d="M9 8c-2-4 1-7 4-6l-2 3 1 2 3-2c1 3-2 6-6 3z" fill="#c4c7cc"/></svg></button></div>
    <div class="cmd-field d-flex align-items-center flex-grow-1 px-1"><svg width="16" height="14"><path d="M.5 1.500h15v11H.5z" fill="none" stroke="#55585c"/><path d="M0 1h16v3H0z" fill="#55585c"/><path d="M2 6l3 2-3 2M7 11h4" stroke="#55585c" fill="none"/></svg><span class="caret"></span><input class="cmd-input flex-grow-1 ms-1" type="text" aria-label="Commande" placeholder="Entrez une commande"><svg width="8" height="6"><path d="M0 5h8L4 1z" fill="#55585c"/></svg></div>
  </div>
</main>

<footer class="foot d-flex justify-content-between">
  <nav class="d-flex ps-2 ms-1" aria-label="Présentations"><a href="#" class="lay-tab on">Objet</a><a href="#" class="lay-tab">Layout1</a><a href="#" class="lay-tab">Layout2</a><button class="lay-tab px-1" aria-label="Nouvelle présentation"><svg width="12" height="12"><path d="M6 2v8M2 6h8" stroke="#b0b5bc" stroke-width="2"/></svg></button></nav>
  <div class="status d-flex">
    <div class="grp"><button class="px-1">OBJET</button></div>
    <div class="grp"><button class="st" aria-label="Grille"><svg width="16" height="16"><path d="M4.500 0v16M8.500 0v16M12.500 0v16M0 4.500h16M0 8.500h16M0 12.500h16" stroke="#e0e0e0"/></svg></button><button class="st on" aria-label="Accrochage"><svg width="14" height="14"><path d="M1 2h12M1 7h12M1 12h12" stroke="#fff" stroke-width="2" stroke-dasharray="2 3"/></svg></button><span class="caret mx-1"></span></div>
    <div class="grp"><button class="st" aria-label="Ortho"><svg width="16" height="16"><path d="M1.500 0v14.500H16M2 9.500h4.500V14" stroke="#e0e0e0" fill="none"/></svg></button><button class="st on" aria-label="Repérage polaire"><svg width="18" height="16"><circle cx="8" cy="9" r="6" fill="none" stroke="#fff" stroke-width="1.500"/><path d="M8 9h10M8 9l6-8M12 5c2 2 2 4 2 7" stroke="#fff" fill="none"/></svg></button><span class="caret mx-1"></span><button class="st" aria-label="Isodessin"><svg width="16" height="18"><path d="M8.500 0v7M8.500 11v6" stroke="#3fdc6a"/><path d="M1 2l6 5M10 11l6 5" stroke="#ef6a6a" stroke-width="1.500"/><path d="M7 7h3v4H7z" stroke="#fff" fill="none"/></svg></button><span class="caret mx-1"></span></div>
    <div class="grp"><button class="st on" aria-label="Repérage"><svg width="18" height="16"><path d="M16 1L2 14.500h16" stroke="#fff" fill="none" stroke-width="1.500"/><path d="M7 6h4v4H7z" fill="#fff"/></svg></button><button class="st on" aria-label="Accrochage objet"><svg width="18" height="18"><path d="M8 4h8v12H3V9" stroke="#fff" fill="none" stroke-width="1.500"/><path d="M1.500 1.500h4v4h-4z" stroke="#fff" fill="none"/></svg></button><span class="caret mx-1"></span></div>
    <div class="grp"><button class="st on" aria-label="Visibilité des annotations"><svg width="18" height="18"><path d="M7 1l6 16-4-4H6l-4 4z" fill="#fff"/><circle cx="14.500" cy="4" r="2.500" fill="none" stroke="#fff"/></svg></button><button class="st" aria-label="Échelle automatique"><svg width="18" height="18"><path d="M7 2l5 15-3-4H6l-4 4z" fill="#ddd"/><path d="M13 1l-2 5h3l-2 4 5-6h-3l2-3z" fill="#ddd"/></svg></button><button class="st" aria-label="Échelle d'annotation"><svg width="18" height="18"><path d="M9 2l6 15-4-4H7l-4 4z" fill="#ddd"/></svg></button><button class="d-flex align-items-center gap-1 me-1">1:1<span class="caret"></span></button></div>
    <div class="grp"><button class="st" aria-label="Espace de travail"><svg width="16" height="16"><circle cx="8" cy="8" r="4" fill="none" stroke="#ddd" stroke-width="4"/><path d="M8 0v3M8 13v3M0 8h3M13 8h3M2.500 2.500l2 2M11.500 11.500l2 2M13.500 2.500l-2 2M4.500 11.500l-2 2" stroke="#ddd" stroke-width="3"/></svg></button><span class="caret mx-1"></span></div>
    <div class="grp"><button class="st" aria-label="Moniteur"><svg width="16" height="16"><path d="M8 0v16M0 8h16" stroke="#ddd" stroke-width="2"/></svg></button></div>
    <div class="grp"><button class="st" aria-label="Isoler"><svg width="18" height="18"><path d="M2 2h5v6H2zM5 16.500l3-6 3 6z" stroke="#ddd" fill="none"/><circle cx="13" cy="8" r="3" stroke="#ddd" fill="none"/></svg></button></div>
    <div class="grp"><button class="st" aria-label="Performances"><svg width="18" height="18"><path d="M1 1h9l4 4v6H1z" fill="#3d86d8"/><path d="M5 0v9M0 5h12" stroke="#fff"/><path d="M1 9h6v6H1z" fill="#f5b93c"/><path d="M7 11l4 4 6-8" stroke="#58b65a" stroke-width="3" fill="none"/></svg></button></div>
    <div class="grp"><button class="st" aria-label="Plein écran"><svg width="16" height="14"><path d="M.5.500h15v13H.5z" stroke="#ddd" fill="none"/><path d="M3 11l3-3M3 8v3h3M13 3l-3 3M10 3h3v3" stroke="#ddd" fill="none"/></svg></button><button class="st" aria-label="Personnalisation"><svg width="16" height="16"><path d="M0 2h16M0 8h16M0 14h16" stroke="#ddd" stroke-width="2"/></svg></button></div>
  </div>
</footer>
</div>
<script src="https://cdn.jsdelivr.net/npm/bootstrap@5.3.0/dist/js/bootstrap.bundle.min.js"></script>
</body>
</html>
